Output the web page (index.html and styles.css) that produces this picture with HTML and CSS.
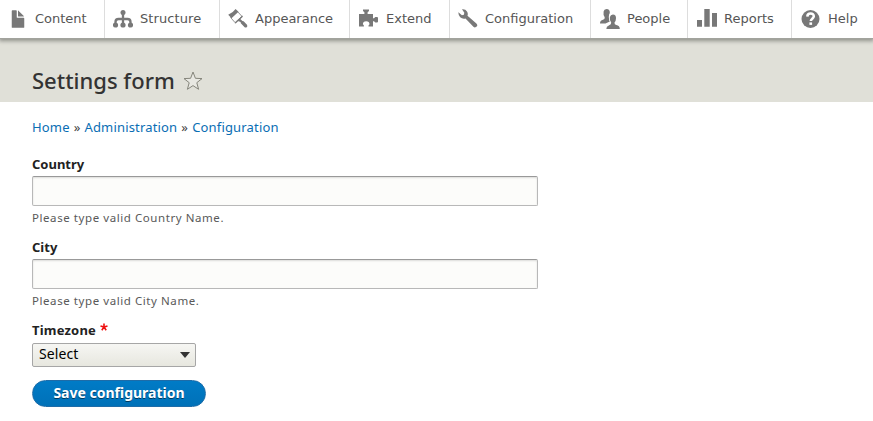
FILE: index.html
```
<!DOCTYPE html>
<html lang="en">
<head>
<meta charset="utf-8">
<title>Settings form</title>
<link rel="stylesheet" href="styles.css">
</head>
<body>
<nav class="toolbar">
  <a class="tab tab-content"><svg viewBox="0 0 16 16"><path d="M12.502 7h-5c-.276 0-.502-.225-.502-.5v-5c0-.275-.225-.5-.5-.5h-3c-.275 0-.5.225-.5.5v13.029c0 .275.225.5.5.5h9.002c.275 0 .5-.225.5-.5v-7.029c0-.275-.225-.5-.5-.5zM8.502 6h4c.275 0 .34-.16.146-.354l-4.293-4.292c-.195-.195-.353-.129-.353.146v4c0 .275.225.5.5.5z"/></svg><span>Content</span></a>
  <a class="tab tab-structure"><svg viewBox="0 0 20 20"><circle cx="10" cy="3.5" r="2.5"/><circle cx="2.500" cy="16" r="2.600"/><circle cx="10" cy="16" r="2.600"/><circle cx="17.500" cy="16" r="2.600"/><path class="line" d="M10 4v11M2.500 15v-2q0-3 3-3h9q3 0 3 3V15"/></svg><span>Structure</span></a>
  <a class="tab tab-appearance"><svg viewBox="0 0 20 20"><path d="M.2 5.800Q4.800 3.900 7.600 0l2.900 2.800-7 6.500z"/><path class="thin" d="M9.300 2.300l4.600 5-6.800 6.300-4.700-5.300"/><path d="M14.300 6.500l.6 1.300-7.200 6.800-1.200-.7zM9.900 12l2.200-2.200 2.300 2.300 1.200.1 3.400 3.500q.9 1.500-.3 2.500-1.300.8-2.300-.2l-3.600-3.700-.2-1.200z"/></svg><span>Appearance</span></a>
  <a class="tab tab-extend"><svg viewBox="0 0 20 20"><path d="M1 5h5.400V3.300L5 2V.4h6V2L9.600 3.300V5H15v4.300h1L17.300 8H19q1 0 1 1v3.500q0 1-1 1h-1.700L16 12.200h-1v5.400h-4.500v-1.200l1-1.200q0-3-3.300-3t-3.300 3l1 1.200v1.200H1z"/></svg><span>Extend</span></a>
  <a class="tab tab-config"><svg viewBox="0 0 20 20"><path d="M4 .2Q7.500-.2 9 2.400q1.300 2.100.5 4.300l8.900 7.700q1.600 1.600.3 3.200-1.600 1.500-3.300.2L7.500 9.500Q4.500 10.300 2.200 8.300.2 6.400.4 3.300l3.500 2.900 2-.5.400-2z"/></svg><span>Configuration</span></a>
  <a class="tab tab-people"><svg viewBox="0 0 20 20"><path d="M3.600 2.500Q4 0 6.500 0q3.500 0 3.300 4-.9 1-1 4 .2 3.500 1 4.500L5.500 14.400H0q0-3 3-3.700 2-.5 1.700-2.500Q3 6 3.600 2.500z"/><path class="person" d="M9.900 8q.6-2.600 3-2.600 3.300 0 3.100 3.800 0 2.700-1.500 4.200-.3 2 1.800 2.600 3.500.7 3.500 4H6.300q0-2.700 2.500-3.500 2.700-.7 2.400-2.900Q9.300 11.700 9.900 8z"/></svg><span>People</span></a>
  <a class="tab tab-reports"><svg viewBox="0 0 20 20"><path d="M0 11h5v6.700H0zM7.300 0h5.400v17.700H7.300zM15 4h5v13.700h-5z"/></svg><span>Reports</span></a>
  <a class="tab tab-help"><svg viewBox="0 0 20 20"><circle cx="9.500" cy="10" r="9"/><path class="question" d="M6.300 7.600C6.500 3.500 13.100 3.800 12.800 7.400c-.1 2.200-3 2.400-3 4.700"/><rect class="dot" x="8.400" y="13.400" width="2.700" height="2.500"/></svg><span>Help</span></a>
</nav>
<header class="page-header">
  <h1>Settings form</h1>
  <svg class="star" viewBox="0 0 20 20"><path d="M10 1l2.400 6.300 6.600.3-5.200 4.100 1.800 6.600L10 14.600l-5.600 3.700 1.800-6.600L1 7.600l6.600-.3z"/></svg>
</header>
<main>
  <div class="breadcrumb"><a>Home</a><span>»</span><a>Administration</a><span>»</span><a>Configuration</a></div>
  <form>
    <div class="field">
      <label for="country"><span>Country</span></label>
      <input id="country" type="text">
      <p class="hint">Please type valid Country Name.</p>
    </div>
    <div class="field">
      <label for="city"><span>City</span></label>
      <input id="city" type="text">
      <p class="hint">Please type valid City Name.</p>
    </div>
    <label><span class="wide">Timezone</span><svg class="required" viewBox="0 0 8 8"><path d="M4 4V.5M4 4L.5 2.900M4 4l3.500-1.100M4 4L1.800 7.200M4 4l2.200 3.200"/></svg></label>
    <div class="select"><span>Select</span><i></i></div>
    <button type="button">Save configuration</button>
  </form>
</main>
</body>
</html>
```
FILE: styles.css
```
* { box-sizing: border-box; }
body { margin: 0; background: #fff; color: #333; font-family: "Noto Sans", sans-serif; }
.toolbar { display: flex; height: 38px; position: relative; background: #fff; font: 13px/38px "DejaVu Sans", sans-serif; color: #565656; box-shadow: 0 1px 0 #a2a39d, 0 2px 4px 1px #8f908a; }
.tab { display: flex; flex: none; width: 115px; padding-left: 8px; border-right: 1px solid #ddd; white-space: nowrap; }
.tab svg { flex: none; width: 20px; height: 20px; margin: 9px 7px 0 0; fill: #787878; }
.tab .line { fill: none; stroke: #787878; stroke-width: 2.300; }
.tab .thin { fill: none; stroke: #787878; stroke-width: .8; }
.tab .person { stroke: #fff; stroke-width: 1; paint-order: stroke; }
.tab .question { fill: none; stroke: #fff; stroke-width: 2.500; }
.tab .dot { fill: #fff; }
.tab-content { width: 105px; }
.tab-structure span { letter-spacing: .1px; }
.tab-appearance { width: 130px; }
.tab-extend { width: 100px; }
.tab-extend span { padding-left: 1px; }
.tab-config { width: 141px; }
.tab-people { width: 97px; padding-left: 9px; }
.tab-reports { width: 104px; padding-left: 9px; }
.tab-help { width: 81px; padding-left: 9px; border: 0; }
.page-header { display: flex; height: 64px; padding: 28px 0 0 32px; background: #e0e0d8; }
h1 { margin: 0; width: 143px; font: 500 22px/28px "Noto Sans", sans-serif; white-space: nowrap; }
.star { width: 20px; height: 20px; margin: 5px 0 0 8px; fill: #e8e8e2; stroke: #85857b; stroke-width: 1; }
main { padding: 16px 32px; }
.breadcrumb { display: flex; gap: 4px; height: 18px; font-size: 13px; line-height: 18px; color: #444; letter-spacing: .17px; }
.breadcrumb a { color: #0a6eb4; }
form { padding-top: 18px; }
.field { height: 83px; }
label { display: flex; height: 22px; font-size: 13px; line-height: 20px; font-weight: 700; color: #222; }
.wide { letter-spacing: .2px; }
input { display: block; width: 506px; height: 30px; border: 1px solid #b8b8b8; border-top-color: #999; border-radius: 2px; background: #fcfcfa; box-shadow: inset 0 1px 2px rgba(0,0,0,.13); }
.hint { margin: 4px 0 0; font-size: 11.500px; line-height: 16px; color: #595959; letter-spacing: .57px; }
.required { width: 8px; height: 8px; margin: 3px 0 0 4px; fill: none; stroke: #e11; stroke-width: 1.600; }
.select { display: flex; justify-content: space-between; width: 164px; height: 24px; margin-top: 1px; padding: 0 5px 0 6px; border: 1px solid #a6a6a6; border-radius: 2px; background: linear-gradient(#f6f6f3, #e7e7df); color: #000; font-size: 14px; line-height: 20px; letter-spacing: .1px; }
.select i { width: 0; height: 0; margin-top: 8px; border: 5px solid transparent; border-top: 6px solid #333; border-bottom: 0; }
button { display: block; width: 174px; height: 27px; margin-top: 13px; padding: 0 0 2px; border: 1px solid #1e6ca8; border-radius: 14px; background: linear-gradient(#007bc6, #0071b8); color: #fff; font: 700 14px/23px "Noto Sans", sans-serif; text-shadow: 0 1px rgba(0,0,0,.5); }
```
